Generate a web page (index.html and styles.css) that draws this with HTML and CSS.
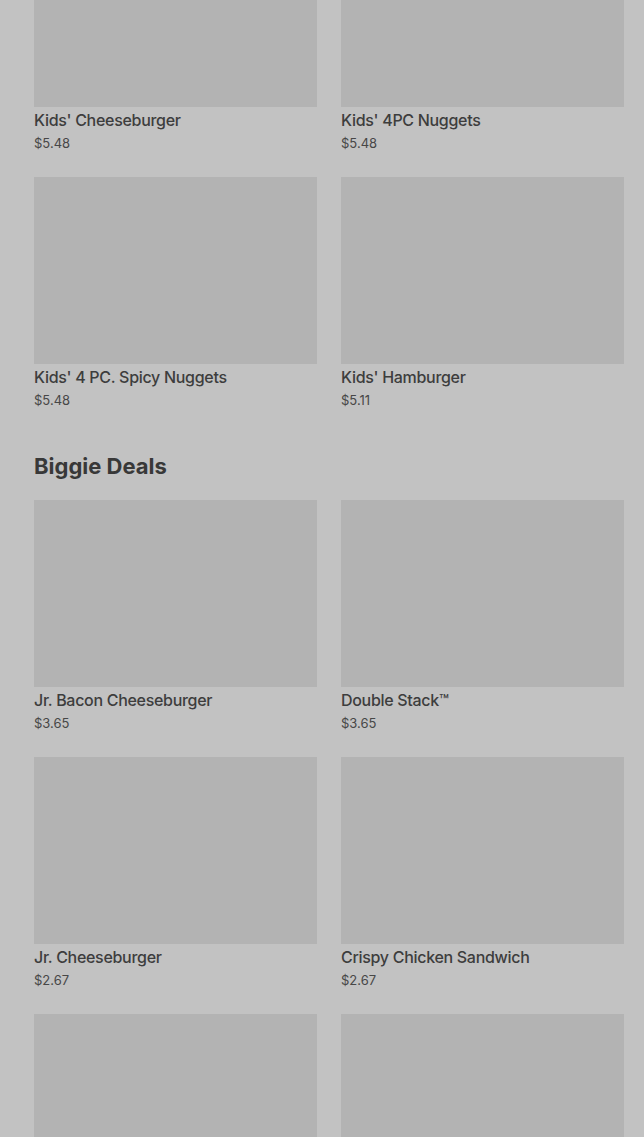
FILE: index.html
```html
<!DOCTYPE html>
<html>
  <head>
    <meta charset="UTF-8" />
    <link rel="stylesheet" href="styles.css">
  </head>

  <body>
    <div class="menu">
      <section class="category">
        <div class="grid">
          <div class="item">
            <div class="thumb"></div>
            <p class="name">Kids' Cheeseburger</p>
            <p class="price">$5.48</p>
          </div>
          <div class="item">
            <div class="thumb"></div>
            <p class="name">Kids' 4PC Nuggets</p>
            <p class="price">$5.48</p>
          </div>
          <div class="item">
            <div class="thumb"></div>
            <p class="name">Kids' 4 PC. Spicy Nuggets</p>
            <p class="price">$5.48</p>
          </div>
          <div class="item">
            <div class="thumb"></div>
            <p class="name">Kids' Hamburger</p>
            <p class="price">$5.11</p>
          </div>
        </div>
      </section>

      <section class="category">
        <h2>Biggie Deals</h2>
        <div class="grid">
          <div class="item">
            <div class="thumb"></div>
            <p class="name">Jr. Bacon Cheeseburger</p>
            <p class="price">$3.65</p>
          </div>
          <div class="item">
            <div class="thumb"></div>
            <p class="name">Double Stack™</p>
            <p class="price">$3.65</p>
          </div>
          <div class="item">
            <div class="thumb"></div>
            <p class="name">Jr. Cheeseburger</p>
            <p class="price">$2.67</p>
          </div>
          <div class="item">
            <div class="thumb"></div>
            <p class="name">Crispy Chicken Sandwich</p>
            <p class="price">$2.67</p>
          </div>
          <!-- next row is only peeking in at the bottom -->
          <div class="item">
            <div class="thumb"></div>
          </div>
          <div class="item">
            <div class="thumb"></div>
          </div>
        </div>
      </section>
    </div>
  </body>
</html>
```

FILE: styles.css
```css
html,
body {
  margin: 0;
  background: #c2c2c2;
  overflow: hidden;
}

body {
  font-family: Inter, "Noto Sans", sans-serif;
  color: #3b3b3b;
}

.menu {
  padding: 0 20px 0 34px;
  margin-top: -80px;
}

.category h2 {
  font-size: 22px;
  line-height: 28px;
  font-weight: 700;
  color: #383838;
  margin: 43px 0 20px;
}

.grid {
  display: grid;
  grid-template-columns: 1fr 1fr;
  column-gap: 24px;
  row-gap: 25px;
}

.thumb {
  height: 187px;
  background: #b3b3b3;
}

.name {
  margin: 3px 0 0;
  font-size: 16px;
  line-height: 20px;
  font-weight: 500;
  letter-spacing: -0.3px;
  color: #3d3d3d;
}

.price {
  margin: 4px 0 0;
  font-size: 13px;
  line-height: 18px;
  color: #474747;
}
```
